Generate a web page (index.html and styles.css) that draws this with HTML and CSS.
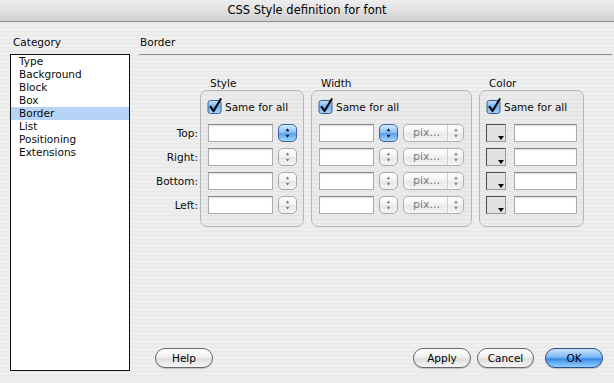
FILE: index.html
```html
<!DOCTYPE html>
<html>
<head>
<meta charset="utf-8">
<link rel="stylesheet" href="styles.css">
</head>
<body>
<div class="window">
  <div class="titlebar">CSS Style definition for font</div>
  <div class="main">
    <div class="sidebar">
      <div class="side-label">Category</div>
      <ul class="catlist">
        <li>Type</li>
        <li>Background</li>
        <li>Block</li>
        <li>Box</li>
        <li class="selected">Border</li>
        <li>List</li>
        <li>Positioning</li>
        <li>Extensions</li>
      </ul>
    </div>
    <div class="panel">
      <div class="panel-head">Border</div>
      <div class="groups">
        <div class="rowlabels">
          <div>Top:</div>
          <div>Right:</div>
          <div>Bottom:</div>
          <div>Left:</div>
        </div>

        <div class="group group-style">
          <div class="group-title">Style</div>
          <div class="group-box">
            <div class="check">
              <svg class="cb" width="16" height="16" viewBox="0 0 16 16"><defs><linearGradient id="cbg1" x1="0" y1="0" x2="0" y2="1"><stop offset="0" stop-color="#c9e3fb"/><stop offset="0.5" stop-color="#6fb1f0"/><stop offset="1" stop-color="#a9d6fb"/></linearGradient></defs><rect x="1" y="2.5" width="13" height="13" rx="2.5" fill="url(#cbg1)" stroke="#3b5d8a"/><path d="M3.6 8.8 L6.6 13 L13.6 1.2" fill="none" stroke="#0b0b14" stroke-width="2.2" stroke-linecap="round" stroke-linejoin="round"/></svg>
              <span>Same for all</span>
            </div>
            <div class="row"><span class="field f-style"></span><span class="spin spin-blue"><svg width="19" height="18" viewBox="0 0 19 18"><path d="M9.5 4.2 L11.6 7.2 L7.4 7.2 Z M9.5 13.8 L11.6 10.8 L7.4 10.8 Z" fill="#10203a"/></svg></span></div>
            <div class="row"><span class="field f-style"></span><span class="spin"><svg width="19" height="18" viewBox="0 0 19 18"><path d="M9.5 4.4 L11.4 7.2 L7.6 7.2 Z M9.5 13.6 L11.4 10.8 L7.6 10.8 Z" fill="#808080"/></svg></span></div>
            <div class="row"><span class="field f-style"></span><span class="spin"><svg width="19" height="18" viewBox="0 0 19 18"><path d="M9.5 4.4 L11.4 7.2 L7.6 7.2 Z M9.5 13.6 L11.4 10.8 L7.6 10.8 Z" fill="#808080"/></svg></span></div>
            <div class="row"><span class="field f-style"></span><span class="spin"><svg width="19" height="18" viewBox="0 0 19 18"><path d="M9.5 4.4 L11.4 7.2 L7.6 7.2 Z M9.5 13.6 L11.4 10.8 L7.6 10.8 Z" fill="#808080"/></svg></span></div>
          </div>
        </div>

        <div class="group group-width">
          <div class="group-title">Width</div>
          <div class="group-box">
            <div class="check">
              <svg class="cb" width="16" height="16" viewBox="0 0 16 16"><defs><linearGradient id="cbg2" x1="0" y1="0" x2="0" y2="1"><stop offset="0" stop-color="#c9e3fb"/><stop offset="0.5" stop-color="#6fb1f0"/><stop offset="1" stop-color="#a9d6fb"/></linearGradient></defs><rect x="1" y="2.5" width="13" height="13" rx="2.5" fill="url(#cbg2)" stroke="#3b5d8a"/><path d="M3.6 8.8 L6.6 13 L13.6 1.2" fill="none" stroke="#0b0b14" stroke-width="2.2" stroke-linecap="round" stroke-linejoin="round"/></svg>
              <span>Same for all</span>
            </div>
            <div class="row"><span class="field f-width"></span><span class="spin spin-blue"><svg width="19" height="18" viewBox="0 0 19 18"><path d="M9.5 4.2 L11.6 7.2 L7.4 7.2 Z M9.5 13.8 L11.6 10.8 L7.4 10.8 Z" fill="#10203a"/></svg></span><span class="select"><span class="sel-text">pix...</span><span class="sel-arrows"><svg width="10" height="18" viewBox="0 0 10 18"><path d="M5 4.4 L6.9 7.2 L3.1 7.2 Z M5 13.6 L6.9 10.8 L3.1 10.8 Z" fill="#808080"/></svg></span></span></div>
            <div class="row"><span class="field f-width"></span><span class="spin"><svg width="19" height="18" viewBox="0 0 19 18"><path d="M9.5 4.4 L11.4 7.2 L7.6 7.2 Z M9.5 13.6 L11.4 10.8 L7.6 10.8 Z" fill="#808080"/></svg></span><span class="select"><span class="sel-text">pix...</span><span class="sel-arrows"><svg width="10" height="18" viewBox="0 0 10 18"><path d="M5 4.4 L6.9 7.2 L3.1 7.2 Z M5 13.6 L6.9 10.8 L3.1 10.8 Z" fill="#808080"/></svg></span></span></div>
            <div class="row"><span class="field f-width"></span><span class="spin"><svg width="19" height="18" viewBox="0 0 19 18"><path d="M9.5 4.4 L11.4 7.2 L7.6 7.2 Z M9.5 13.6 L11.4 10.8 L7.6 10.8 Z" fill="#808080"/></svg></span><span class="select"><span class="sel-text">pix...</span><span class="sel-arrows"><svg width="10" height="18" viewBox="0 0 10 18"><path d="M5 4.4 L6.9 7.2 L3.1 7.2 Z M5 13.6 L6.9 10.8 L3.1 10.8 Z" fill="#808080"/></svg></span></span></div>
            <div class="row"><span class="field f-width"></span><span class="spin"><svg width="19" height="18" viewBox="0 0 19 18"><path d="M9.5 4.4 L11.4 7.2 L7.6 7.2 Z M9.5 13.6 L11.4 10.8 L7.6 10.8 Z" fill="#808080"/></svg></span><span class="select"><span class="sel-text">pix...</span><span class="sel-arrows"><svg width="10" height="18" viewBox="0 0 10 18"><path d="M5 4.4 L6.9 7.2 L3.1 7.2 Z M5 13.6 L6.9 10.8 L3.1 10.8 Z" fill="#808080"/></svg></span></span></div>
          </div>
        </div>

        <div class="group group-color">
          <div class="group-title">Color</div>
          <div class="group-box">
            <div class="check">
              <svg class="cb" width="16" height="16" viewBox="0 0 16 16"><defs><linearGradient id="cbg3" x1="0" y1="0" x2="0" y2="1"><stop offset="0" stop-color="#c9e3fb"/><stop offset="0.5" stop-color="#6fb1f0"/><stop offset="1" stop-color="#a9d6fb"/></linearGradient></defs><rect x="1" y="2.5" width="13" height="13" rx="2.5" fill="url(#cbg3)" stroke="#3b5d8a"/><path d="M3.6 8.8 L6.6 13 L13.6 1.2" fill="none" stroke="#0b0b14" stroke-width="2.2" stroke-linecap="round" stroke-linejoin="round"/></svg>
              <span>Same for all</span>
            </div>
            <div class="row row-color"><span class="swatch"><span class="swatch-tri"></span></span><span class="field f-color"></span></div>
            <div class="row row-color"><span class="swatch"><span class="swatch-tri"></span></span><span class="field f-color"></span></div>
            <div class="row row-color"><span class="swatch"><span class="swatch-tri"></span></span><span class="field f-color"></span></div>
            <div class="row row-color"><span class="swatch"><span class="swatch-tri"></span></span><span class="field f-color"></span></div>
          </div>
        </div>
      </div>

      <div class="buttons">
        <span class="btn">Help</span>
        <span class="btn btn-apply">Apply</span>
        <span class="btn btn-cancel">Cancel</span>
        <span class="btn btn-ok">OK</span>
      </div>
    </div>
  </div>
</div>
</body>
</html>
```

FILE: styles.css
```css
* { box-sizing: border-box; }

html, body {
  margin: 0;
  padding: 0;
}

body {
  width: 614px;
  height: 383px;
  overflow: hidden;
  font-family: "DejaVu Sans", Verdana, sans-serif;
  font-size: 10.5px;
  color: #0a0a0a;
  background: repeating-linear-gradient(to bottom, #eeeeee 0, #eeeeee 3px, #e8e8e8 3px, #e8e8e8 4px);
}

.window {
  width: 614px;
  height: 383px;
  display: flex;
  flex-direction: column;
}

.titlebar {
  height: 22px;
  flex: none;
  line-height: 21px;
  text-align: center;
  font-size: 11.5px;
  color: #000;
  background: linear-gradient(to bottom, #eeeeee, #e2e2e2 45%, #d0d0d0);
  border-bottom: 1px solid #8c8c8c;
}

.main {
  flex: 1;
  display: flex;
  gap: 8px;
  padding: 14px 2px 12px 10px;
}

.sidebar {
  width: 120px;
  flex: none;
  display: flex;
  flex-direction: column;
}

.side-label {
  height: 13px;
  line-height: 13px;
  padding-left: 3px;
  margin-bottom: 5px;
}

.catlist {
  flex: 1;
  margin: 0;
  padding: 0;
  list-style: none;
  background: #fff;
  border: 1px solid #111;
}

.catlist li {
  height: 13px;
  line-height: 13px;
  padding-left: 8px;
}

.catlist li.selected {
  background: #b7d4f7;
}

.panel {
  flex: 1;
  display: flex;
  flex-direction: column;
}

.panel-head {
  height: 19px;
  line-height: 13px;
  padding-left: 1px;
  border-bottom: 1px solid #8e8e8e;
  margin-left: 1px;
}

.groups {
  display: flex;
  margin-top: 22px;
}

.rowlabels {
  width: 62px;
  padding-top: 47px;
  padding-right: 2px;
  text-align: right;
}

.rowlabels div {
  height: 18px;
  line-height: 18px;
  margin-bottom: 6px;
}

.group {
  display: flex;
  flex-direction: column;
}

.group + .group {
  margin-left: 7px;
}

.group-style { width: 104px; }
.group-width { width: 161px; }
.group-color { width: 105px; }

.group-title {
  height: 13px;
  line-height: 13px;
  padding-left: 10px;
}

.group-box {
  height: 137px;
  border: 1px solid #b6b6b6;
  border-radius: 7px;
  background: rgba(0, 0, 0, 0.015);
  padding: 7px 0 0 7px;
  display: flex;
  flex-direction: column;
  gap: 6px;
}

.check {
  height: 18px;
  display: flex;
  align-items: center;
  margin-left: -1px;
  margin-bottom: 2px;
}

.cb {
  flex: none;
  margin-right: 2px;
  margin-top: -2px;
}

.row {
  height: 18px;
  display: flex;
  gap: 5px;
}

.row-color {
  gap: 8px;
  margin-left: -1px;
}

.field {
  height: 18px;
  background: #fff;
  border: 1px solid #adadad;
  border-top-color: #8a8a8a;
  box-shadow: inset 0 1px 1px rgba(0, 0, 0, 0.12);
}

.f-style { width: 65px; }
.f-width { width: 55px; }
.f-color { width: 63px; }

.spin {
  width: 19px;
  height: 18px;
  flex: none;
  border: 1px solid #a8a8a8;
  border-radius: 5px;
  background: linear-gradient(to bottom, #ffffff, #f1f1f1 50%, #e6e6e6 51%, #f4f4f4);
  display: flex;
  align-items: center;
  justify-content: center;
  overflow: hidden;
}

.spin svg {
  display: block;
  margin: -1px;
}

.spin-blue {
  border-color: #3e64a2;
  background: linear-gradient(to bottom, #d3e8fc, #8ec4f6 45%, #5aa3ee 55%, #a8d7fc);
}

.select {
  width: 61px;
  height: 18px;
  flex: none;
  border: 1px solid #b0b0b0;
  border-radius: 5px;
  background: linear-gradient(to bottom, #ffffff, #f2f2f2 50%, #e8e8e8 51%, #f5f5f5);
  display: flex;
  align-items: center;
}

.sel-text {
  flex: 1;
  padding-left: 9px;
  font-size: 11px;
  color: #7a7a7a;
  line-height: 16px;
}

.sel-arrows {
  width: 16px;
  height: 16px;
  border-left: 1px solid #cfcfcf;
  display: flex;
  align-items: center;
  justify-content: center;
}

.sel-arrows svg {
  display: block;
}

.swatch {
  width: 20px;
  height: 18px;
  flex: none;
  position: relative;
  background: #e2e2e2;
  border-top: 1px solid #4a4a4a;
  border-left: 1px solid #4a4a4a;
  border-right: 1px solid #9a9a9a;
  border-bottom: 1px solid #9a9a9a;
}

.swatch-tri {
  position: absolute;
  right: 1px;
  bottom: 1px;
  width: 0;
  height: 0;
  border-left: 3.5px solid transparent;
  border-right: 3.5px solid transparent;
  border-top: 4px solid #000;
}

.buttons {
  margin-top: auto;
  margin-bottom: 3px;
  padding-left: 17px;
  display: flex;
}

.btn {
  height: 20px;
  width: 58px;
  border: 1px solid #6a6a6a;
  border-radius: 10px;
  background: linear-gradient(to bottom, #fdfdfd, #f0f0f0 45%, #dedede 55%, #f6f6f6);
  box-shadow: 0 1px 1px rgba(0, 0, 0, 0.2);
  text-align: center;
  line-height: 18px;
  color: #000;
}

.btn-apply { margin-left: auto; }
.btn-cancel { margin-left: 6px; width: 57px; }

.btn-ok {
  margin-left: 11px;
  margin-right: 9px;
  border-color: #2e4f86;
  background: linear-gradient(to bottom, #c9e3fc, #7eb8f3 45%, #3d8ae6 55%, #8fd0fd);
}
```
